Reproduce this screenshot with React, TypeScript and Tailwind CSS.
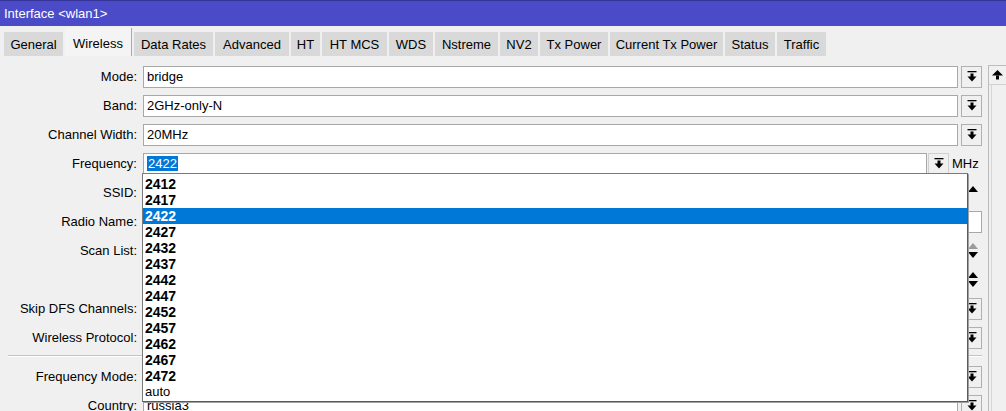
import React from "react";

const tabs: { name: string; w: string; sel?: boolean }[] = [
  { name: "General", w: "w-[59px]" },
  { name: "Wireless", w: "w-[67px]", sel: true },
  { name: "Data Rates", w: "w-[79px]" },
  { name: "Advanced", w: "w-[74px]" },
  { name: "HT", w: "w-[29px]" },
  { name: "HT MCS", w: "w-[65px]" },
  { name: "WDS", w: "w-[44px]" },
  { name: "Nstreme", w: "w-[63px]" },
  { name: "NV2", w: "w-[38px]" },
  { name: "Tx Power", w: "w-[68px]" },
  { name: "Current Tx Power", w: "w-[113px]" },
  { name: "Status", w: "w-[50px]" },
  { name: "Traffic", w: "w-[49px]" },
];

const freqs = ["2412", "2417", "2422", "2427", "2432", "2437", "2442", "2447", "2452", "2457", "2462", "2467", "2472"];

function DownIcon() {
  return (
    <svg width="10" height="11" viewBox="0 0 10 11">
      <rect x="0.5" y="0" width="9" height="1.3" fill="#000" />
      <rect x="3.5" y="2.5" width="3" height="3.5" fill="#000" />
      <polygon points="0.5,5.5 9.5,5.5 5,10.5" fill="#000" />
    </svg>
  );
}

function UpTri({ color = "#000" }: { color?: string }) {
  return (
    <svg width="10" height="6" viewBox="0 0 10 6">
      <polygon points="5,0 10,6 0,6" fill={color} />
    </svg>
  );
}
function DownTri({ color = "#000" }: { color?: string }) {
  return (
    <svg width="10" height="6" viewBox="0 0 10 6">
      <polygon points="0,0 10,0 5,6" fill={color} />
    </svg>
  );
}

function Btn() {
  return (
    <div className="ml-[3px] w-[21px] h-[22px] border border-[#b0b0b0] bg-[#f0f0f0] flex items-center justify-center">
      <DownIcon />
    </div>
  );
}

function Input({ children }: { children?: React.ReactNode }) {
  return (
    <div className="flex-1 h-[22px] border border-[#a8a8a8] bg-white flex items-center pl-[3px] text-[13px] text-black">
      {children}
    </div>
  );
}

function Row({ label, children }: { label?: string; children: React.ReactNode }) {
  return (
    <div className="h-[29px] flex items-center">
      <div className="w-[138px] text-right text-[13px] text-black pr-[1px]">{label}</div>
      <div className="ml-[5px] flex-1 flex items-center">{children}</div>
    </div>
  );
}

export default function App() {
  return (
    <div className="w-[1006px] h-[411px] bg-[#f0f0f0] overflow-hidden relative font-['Liberation_Sans',Arial,sans-serif]">
      {/* Title bar */}
      <div className="h-[26px] bg-[#4b4bc8] border-t border-[#33339a] flex items-center pl-[4px] text-white text-[13px]">
        Interface &lt;wlan1&gt;
      </div>
      {/* Tabs */}
      <div className="h-[30px] flex items-end pl-[4px] gap-[2px]">
        {tabs.map((t) =>
          t.sel ? (
            <div
              key={t.name}
              className={`${t.w} h-[28px] bg-[#f4f4f4] border-r border-[#a9a9a9] flex items-start justify-center pt-[6px] text-[13px] text-black`}
            >
              {t.name}
            </div>
          ) : (
            <div
              key={t.name}
              className={`${t.w} h-[24px] bg-[#d9d9d9] flex items-center justify-center pt-[1px] text-[13px] text-black`}
            >
              {t.name}
            </div>
          )
        )}
      </div>
      {/* Body */}
      <div className="flex">
        <div className="w-[982px] pt-[6px]">
          <Row label="Mode:">
            <Input>bridge</Input>
            <Btn />
          </Row>
          <Row label="Band:">
            <Input>2GHz-only-N</Input>
            <Btn />
          </Row>
          <Row label="Channel Width:">
            <Input>20MHz</Input>
            <Btn />
          </Row>
          <Row label="Frequency:">
            <Input>
              <span className="bg-[#0078d7] text-white px-[1px] leading-[15px]">2422</span>
            </Input>
            <div className="ml-[1px] w-[21px] h-[22px] border border-[#d0d0d0] bg-[#f0f0f0] flex items-center justify-center">
              <DownIcon />
            </div>
            <div className="w-[33px] pl-[3px] text-[13px] text-black">MHz</div>
          </Row>
          <Row label="SSID:">
            <Input />
            <div className="ml-[3px] w-[21px] h-[22px] flex items-start justify-center pt-[4px] pl-[2px]">
              <UpTri />
            </div>
          </Row>
          <Row label="Radio Name:">
            <Input />
          </Row>
          <Row label="Scan List:">
            <Input />
            <div className="ml-[3px] w-[21px] h-[22px] flex flex-col items-center justify-center gap-[3px] pl-[2px]">
              <UpTri color="#9a9a9a" />
              <DownTri />
            </div>
          </Row>
          <Row>
            <div className="flex-1" />
            <div className="ml-[3px] w-[21px] h-[22px] flex flex-col items-center justify-center gap-[3px] pl-[2px]">
              <UpTri />
              <DownTri />
            </div>
          </Row>
          <Row label="Skip DFS Channels:">
            <Input />
            <Btn />
          </Row>
          <Row label="Wireless Protocol:">
            <Input />
            <Btn />
          </Row>
          <div className="h-[10px] pt-[3px] pl-[8px]">
            <div className="border-t border-[#c4c4c4] border-b border-b-white" />
          </div>
          <Row label="Frequency Mode:">
            <Input />
            <Btn />
          </Row>
          <Row label="Country:">
            <Input>russia3</Input>
            <Btn />
          </Row>
        </div>
        {/* Scrollbar */}
        <div className="ml-[6px] mt-[9px] w-[18px] h-[360px] border-l border-t border-[#bcbcbc] bg-[#f0f0f0] flex flex-col">
          <div className="h-[19px] border-b border-[#d0d0d0] flex items-center justify-center">
            <svg width="11" height="10" viewBox="0 0 11 10">
              <polygon points="5.5,0 11,5.5 0,5.5" fill="#000" />
              <rect x="4" y="5.5" width="3" height="4" fill="#000" />
            </svg>
          </div>
          <div className="flex-1 ml-[2px] border-l border-[#d6d6d6]" />
        </div>
      </div>

      {/* Dropdown list overlay */}
      <div className="absolute left-[142px] top-[173px] w-[826px] h-[229px] bg-white border border-[#7a7a7a] border-r-[#5a5a5a] border-b-[#5a5a5a] pt-[2px] shadow-[1px_1px_0_#a0a0a0]">
        {freqs.map((f) => (
          <div
            key={f}
            className={`h-[16px] pl-[2px] flex items-center text-[14px] font-bold leading-[16px] ${
              f === "2422" ? "bg-[#0078d7] text-white" : "text-black"
            }`}
          >
            {f}
          </div>
        ))}
        <div className="h-[16px] pl-[2px] flex items-center text-[13px] leading-[16px] text-black">auto</div>
      </div>
    </div>
  );
}
